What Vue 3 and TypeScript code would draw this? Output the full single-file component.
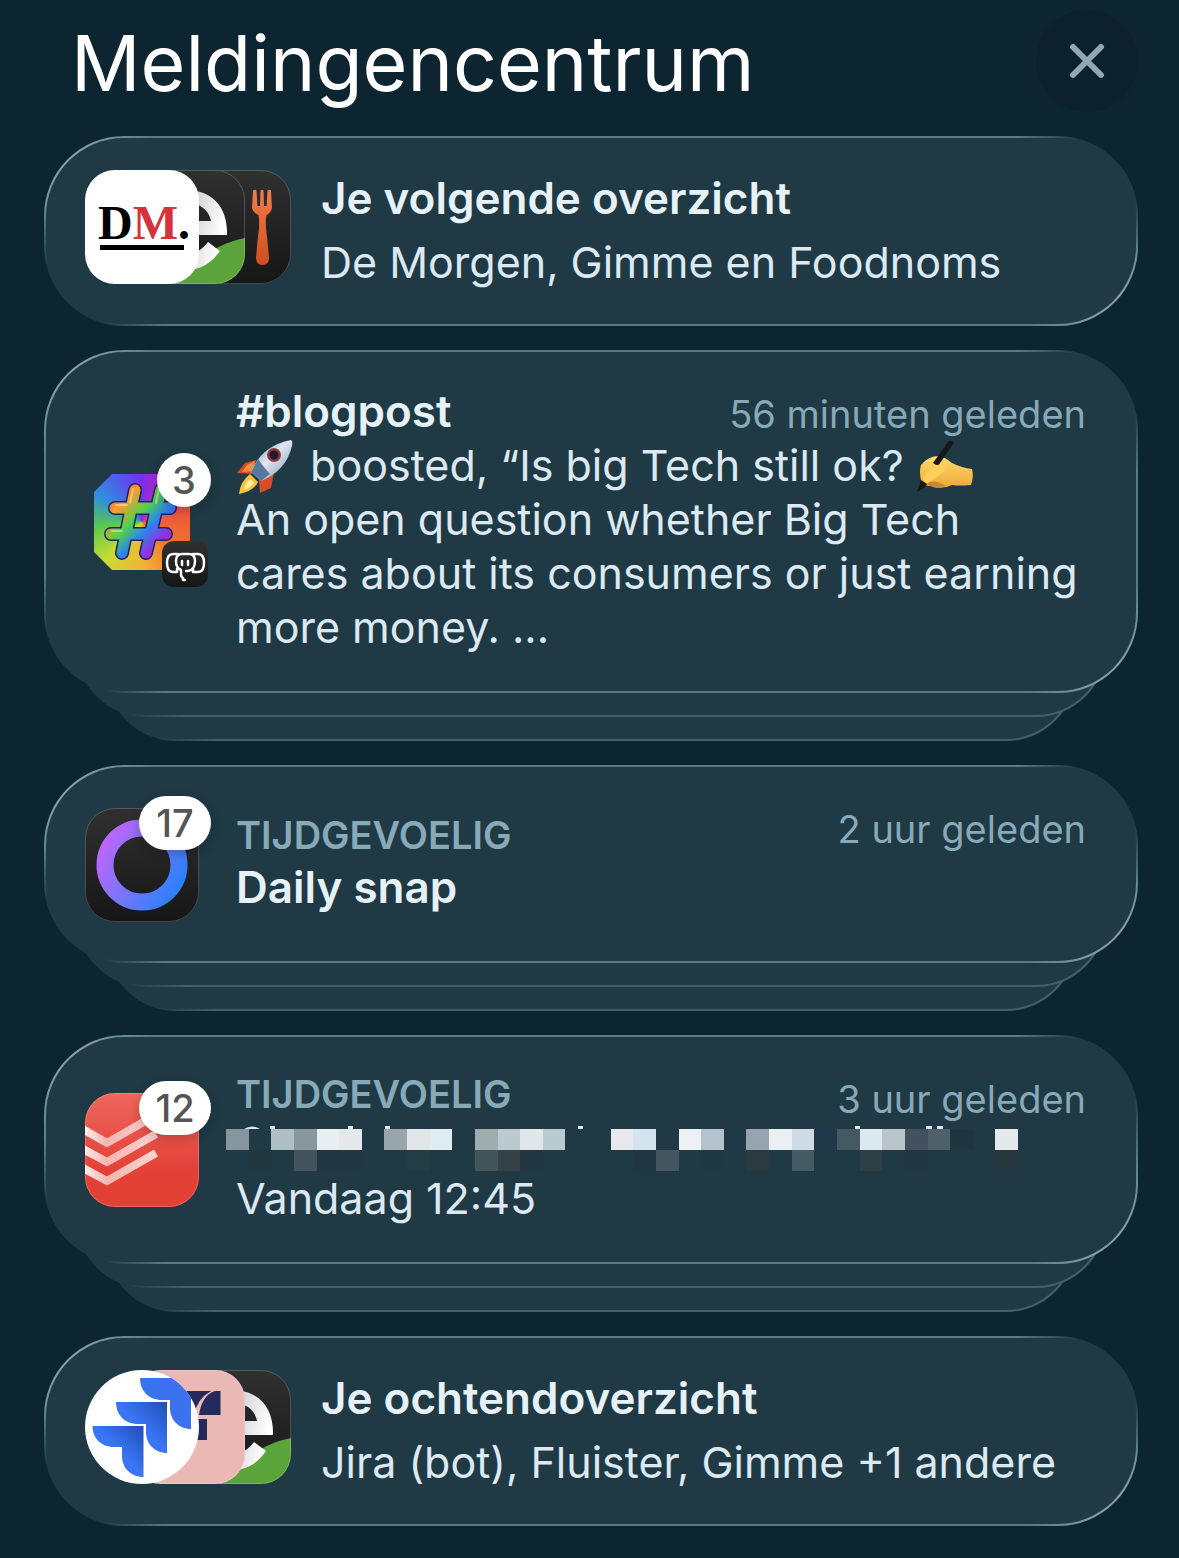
<script setup lang="ts">
type AppIcon = 'morgen' | 'gimme' | 'foodnoms' | 'jira' | 'fluister' | 'hashtag' | 'ring' | 'todoist'

interface Summary {
  kind: 'summary'
  id: string
  title: string
  apps: string
  icons: AppIcon[]
}

interface Stack {
  kind: 'stack'
  id: string
  icon: AppIcon
  count: number
  time: string
  post?: boolean
  label?: string
  title?: string
  redacted?: boolean
  detail?: string
}

const notifications: (Summary | Stack)[] = [
  {
    kind: 'summary',
    id: 'next',
    title: 'Je volgende overzicht',
    apps: 'De Morgen, Gimme en Foodnoms',
    icons: ['morgen', 'gimme', 'foodnoms'],
  },
  { kind: 'stack', id: 'blog', icon: 'hashtag', count: 3, time: '56 minuten geleden', title: '#blogpost', post: true },
  { kind: 'stack', id: 'snap', icon: 'ring', count: 17, time: '2 uur geleden', label: 'TIJDGEVOELIG', title: 'Daily snap' },
  {
    kind: 'stack',
    id: 'todo',
    icon: 'todoist',
    count: 12,
    time: '3 uur geleden',
    label: 'TIJDGEVOELIG',
    redacted: true,
    detail: 'Vandaag 12:45',
  },
  {
    kind: 'summary',
    id: 'morning',
    title: 'Je ochtendoverzicht',
    apps: 'Jira (bot), Fluister, Gimme +1 andere',
    icons: ['jira', 'fluister', 'gimme'],
  },
]

// Mosaic cells: [column, row, colour]
const cells: [number, number, string][] = [
  [0, 0, '#87969e'], [2, 0, '#b0bec5'], [3, 0, '#87969f'], [4, 0, '#e8eff2'], [5, 0, '#e6e9ec'],
  [7, 0, '#9aa5a9'], [8, 0, '#e2e6e9'], [9, 0, '#dfedf1'], [11, 0, '#9fadaf'], [12, 0, '#bccacf'],
  [13, 0, '#e2e6eb'], [14, 0, '#b8cbd1'], [17, 0, '#e8e9ec'], [18, 0, '#d4e4ef'], [20, 0, '#edf1f3'],
  [21, 0, '#b4c2cb'], [23, 0, '#97a4ae'], [24, 0, '#e9eff2'], [25, 0, '#d0dae3'], [26, 0, '#20394a'],
  [27, 0, '#435a63'], [28, 0, '#dce9ef'], [29, 0, '#b9c5ca'], [30, 0, '#43515f'], [31, 0, '#4f606b'],
  [32, 0, '#1f3540'], [34, 0, '#e6e9ec'],
  [1, 1, '#22383f'], [3, 1, '#43555c'], [4, 1, '#223741'], [5, 1, '#223741'], [8, 1, '#233d44'],
  [11, 1, '#435558'], [12, 1, '#354248'], [13, 1, '#223742'], [18, 1, '#203641'], [19, 1, '#44565f'],
  [21, 1, '#203841'], [23, 1, '#2a3a40'], [25, 1, '#445b64'], [28, 1, '#2e3f46'], [30, 1, '#223741'],
  [34, 1, '#26373e'],
]
const column = (i: number): number => Math.round(i * 22.63)
</script>

<template>
  <main class="center">
    <header class="top">
      <h1>Meldingencentrum</h1>
      <button class="close" type="button" aria-label="Sluit">
        <svg viewBox="0 0 36 36" aria-hidden="true"><path d="M4 4L32 32M32 4L4 32" /></svg>
      </button>
    </header>

    <svg class="defs" aria-hidden="true">
      <defs>
        <linearGradient id="dark" x1="0" y1="0" x2="0" y2="1"><stop offset="0" stop-color="#303030" /><stop offset="1" stop-color="#161616" /></linearGradient>
        <linearGradient id="orange" x1="0" y1="0" x2="0" y2="1"><stop offset="0" stop-color="#f47c48" /><stop offset="1" stop-color="#cb4f20" /></linearGradient>
        <linearGradient id="ring" x1="0" y1="0.2" x2="1" y2="0.8"><stop offset="0" stop-color="#bb66fa" /><stop offset="0.5" stop-color="#7576fa" /><stop offset="1" stop-color="#2c80fb" /></linearGradient>
        <linearGradient id="red" x1="0" y1="0" x2="0" y2="1"><stop offset="0" stop-color="#ee665d" /><stop offset="0.7" stop-color="#e34036" /></linearGradient>
        <linearGradient id="chevron" x1="0" y1="0" x2="1" y2="0"><stop offset="0" stop-color="#fff3f1" /><stop offset="0.35" stop-color="#f5b5b0" /><stop offset="1" stop-color="#fbd3d0" /></linearGradient>
        <linearGradient id="jira" x1="1" y1="0" x2="0.3" y2="0.7"><stop offset="0" stop-color="#1f4fb8" /><stop offset="0.7" stop-color="#3a75f5" /></linearGradient>
        <linearGradient id="hash" gradientUnits="userSpaceOnUse" x1="12" y1="14" x2="84" y2="84">
          <stop offset="0" stop-color="#f5453a" /><stop offset="0.22" stop-color="#ff9a2e" /><stop offset="0.42" stop-color="#4fd24a" /><stop offset="0.58" stop-color="#2d83f0" /><stop offset="0.76" stop-color="#9a2be0" /><stop offset="1" stop-color="#e0348a" />
        </linearGradient>
        <linearGradient id="letter" x1="0" y1="0" x2="1" y2="0.2"><stop offset="0.4" stop-color="#bdbdbd" /><stop offset="1" stop-color="#ffffff" /></linearGradient>
        <linearGradient id="hull" x1="0" y1="0" x2="1" y2="1"><stop offset="0" stop-color="#5d83ad" /><stop offset="0.45" stop-color="#dfe7ef" /><stop offset="1" stop-color="#7f93ab" /></linearGradient>
        <linearGradient id="skin" x1="0" y1="0" x2="0" y2="1"><stop offset="0" stop-color="#ffda68" /><stop offset="1" stop-color="#eda93a" /></linearGradient>
      </defs>
    </svg>

    <article v-for="item in notifications" :key="item.id" :class="['note', item.kind]">
      <div class="card">
        <div :class="item.kind === 'summary' ? 'icons' : 'lead'">
          <template v-for="icon in item.kind === 'summary' ? item.icons : [item.icon]" :key="icon">
            <svg v-if="icon === 'morgen'" class="app" viewBox="0 0 114 114" aria-hidden="true">
              <rect width="114" height="114" fill="#fff" />
              <text class="masthead" x="13" y="69">D<tspan fill="#d6323c">M</tspan>.</text>
              <rect x="15" y="75" width="84" height="5" />
            </svg>
            <svg v-else-if="icon === 'gimme'" class="app rim" viewBox="0 0 114 114" aria-hidden="true">
              <rect width="114" height="114" fill="url(#dark)" />
              <path d="M40 114C66 108 64 78 114 68V114Z" fill="#5ba43a" />
              <path fill="url(#letter)" fill-rule="evenodd" d="M96 65H34C35 78 43 84 55 84C64 84 71 80 77 72L89 81C80 94 69 100 55 100C30 100 15 84 15 60C15 36 31 20 55 20C82 20 97 38 96 65ZM80 51C78 40 69 33 56 33C44 33 36 40 34 51Z" />
            </svg>
            <svg v-else-if="icon === 'foodnoms'" class="app rim" viewBox="0 0 114 114" aria-hidden="true">
              <rect width="114" height="114" fill="url(#dark)" />
              <path fill="url(#orange)" d="M76 20.500Q78 19 79.500 20.500L80.500 36H83L83.500 20.500Q85 19 86.500 20.500L87 36H89.500L90.500 20.500Q92.500 19 94 20.500L95 38Q94 43 89.500 45Q88.500 50 89 58Q91 74 92 88Q92 95 85.500 95Q79 95 79 88Q80 74 82 58Q82.500 50 81.500 45Q76 43 75 38Z" />
            </svg>
            <svg v-else-if="icon === 'jira'" class="app round" viewBox="0 0 114 114" aria-hidden="true">
              <rect width="114" height="114" fill="#fff" />
              <path fill="#3a72ef" d="M55 8H106V59C94 59 85 50 85 38V30H77C64 30 55 21 55 8Z" />
              <path fill="url(#jira)" d="M31 32H82V83C70 83 61 74 61 62V54H53C40 54 31 45 31 32Z" />
              <path fill="url(#jira)" d="M7.500 56H58.500V107C46 107 37 98 37 86V77H29C16 77 7.500 68 7.500 56Z" />
            </svg>
            <svg v-else-if="icon === 'fluister'" class="app rim" viewBox="0 0 114 114" aria-hidden="true">
              <rect width="114" height="114" fill="#ebb9b5" />
              <path fill="#252a5c" d="M30 21H80Q66 29 63 45H30ZM89.500 21V45H68Q71 25 84 21ZM30 49H76V70H30Z" />
            </svg>
            <div v-else-if="icon === 'hashtag'" class="avatar">
              <svg viewBox="0 0 96 96" aria-hidden="true">
                <g fill="none" stroke-linecap="round" stroke-linejoin="round">
                  <path stroke="#1c2560" stroke-width="14" d="M41 16L28 79M67 16L52 79M21 34H76M17 60H72" />
                  <path stroke="url(#hash)" stroke-width="11" d="M41 16L28 79M67 16L52 79M21 34H76M17 60H72" />
                  <path stroke="#ffffff" stroke-opacity="0.4" stroke-width="2" d="M39 15L36 29M65 15L62 29M22 31H33M18 57H28" />
                </g>
              </svg>
            </div>
            <svg v-else-if="icon === 'ring'" class="app rim" viewBox="0 0 114 114" aria-hidden="true">
              <rect width="114" height="114" fill="url(#dark)" />
              <circle cx="57" cy="57" r="37" fill="none" stroke="url(#ring)" stroke-width="17" />
            </svg>
            <svg v-else class="app rim" viewBox="0 0 114 114" aria-hidden="true">
              <rect width="114" height="114" fill="url(#red)" />
              <path fill="none" stroke="url(#chevron)" stroke-width="8" d="M-4 35L22 50L69 23M-4 55L22 69L71 41M-4 74L22 88L71 60" />
            </svg>
          </template>
          <template v-if="item.kind === 'stack'">
            <span :class="['count', { wide: item.count > 9 }]">{{ item.count }}</span>
            <svg v-if="item.post" class="source" viewBox="0 0 46 46" aria-hidden="true">
              <rect width="46" height="46" fill="url(#dark)" />
              <g fill="none" stroke="#fff" stroke-width="2.500" stroke-linecap="round" stroke-linejoin="round">
                <path d="M19 29V33Q19 36 21 37V39H23M19 29Q14 27 14 20Q14 13 20 13H27Q33 13 33 20Q33 29 26 30H24M16 13H11Q5 13 5 22Q5 31 11 31H15V28M31 13H36Q42 13 42 22Q42 31 36 31H31V28" />
                <path d="M20 20V24M26 20V24" />
              </g>
            </svg>
          </template>
        </div>

        <div v-if="item.kind === 'summary'" class="digest">
          <h2>{{ item.title }}</h2>
          <p>{{ item.apps }}</p>
        </div>

        <div v-else-if="item.post" class="text">
          <div class="heading">
            <h2>{{ item.title }}</h2>
            <time>{{ item.time }}</time>
          </div>
          <p class="post">
            <svg class="emoji" viewBox="0 0 58 58" role="img" aria-label="raket">
              <path fill="#dd4a26" d="M20 20L9 23L1 33L16 34ZM38 32L35 48L24 53L23 40Z" />
              <path fill="#f1913f" d="M19 21L11 25L6 32L16 31Z" />
              <path fill="#f6c63a" d="M14 34L22 42Q18 51 3 54Q4 42 14 34Z" />
              <path fill="#fff0a0" d="M14 39L18 43Q14 48 8 50Q9 43 14 39Z" />
              <path fill="url(#hull)" d="M15 32Q25 6 55 0Q57 1 56 6Q50 31 25 41Z" />
              <path fill="#56799f" d="M15 32L22 19Q29 29 34 34L25 41Z" />
              <circle cx="38" cy="15" r="7" fill="#8e3940" /><circle cx="38" cy="15" r="4.500" fill="#211c29" />
            </svg>
            boosted, “Is big Tech still ok?
            <svg class="emoji" viewBox="0 0 58 58" role="img" aria-label="schrijvende hand">
              <path fill="url(#skin)" d="M5 25Q12 16 23 16Q29 17 36 23Q46 28 56 29Q58 37 55 45Q44 46 36 45Q26 50 16 46Q6 46 5 40Q3 32 5 25Z" />
              <path fill="#c98a3a" d="M10 43Q18 39 30 46Q22 50 14 46Z" />
              <path fill="#17181c" d="M32 2Q36 -1 38 3L22 26L17 23Z" />
              <path fill="#17181c" d="M5 40L11 44L8 48L1 52Z" />
              <path fill="#ffd15a" d="M7 38Q12 30 21 25Q28 24 29 30Q22 37 12 43Q7 43 7 38Z" />
            </svg>
            <br />An open question whether Big Tech
            <br />cares about its consumers or just earning
            <br />more money. ...
          </p>
        </div>

        <template v-else>
          <div class="text">
            <p class="label">{{ item.label }}</p>
            <h2 v-if="item.title">{{ item.title }}</h2>
            <svg v-if="item.redacted" class="redacted" viewBox="0 0 792 46" role="img" aria-label="Verborgen tekst">
              <g fill="#d9e7ee">
                <path d="M18 4Q26 -1 34 4Z" />
                <path d="M44 1h5v3h-5ZM122 1h5v3h-5ZM159 1h5v3h-5ZM352 1h5v3h-5ZM629 1h5v3h-5ZM700 1h6v3h-6ZM711 1h6v3h-6Z" />
              </g>
              <rect
                v-for="[col, row, fill] in cells"
                :key="`${col}-${row}`"
                :x="column(col)"
                :y="4 + row * 21"
                :width="column(col + 1) - column(col)"
                height="21"
                :fill="fill"
              />
            </svg>
            <p v-if="item.detail">{{ item.detail }}</p>
          </div>
          <time class="aside">{{ item.time }}</time>
        </template>
      </div>
    </article>
  </main>
</template>

<style>
body {
  margin: 0;
  background: #0c2531;
}
</style>

<style scoped>
.center {
  --fill: #1f3a45;
  display: flex;
  flex-direction: column;
  gap: 24px;
  box-sizing: border-box;
  min-height: 100vh;
  padding: 0 41px 31px 44px;
  background: #0c2531;
  color: #dce9f3;
  font-family: Inter, "Noto Sans", sans-serif;
}

h1,
h2,
p {
  margin: 0;
}

.defs {
  position: absolute;
  width: 0;
  height: 0;
}

.top {
  display: flex;
  align-items: center;
  justify-content: space-between;
  height: 112px;
  padding-left: 27px;
}

h1 {
  margin-top: 14px;
  color: #fff;
  font-size: 77px;
  font-weight: 400;
  line-height: 96px;
}

.close {
  display: grid;
  place-items: center;
  width: 102px;
  height: 102px;
  margin-top: 10px;
  padding: 0;
  border: 0;
  border-radius: 50%;
  background: #0c212b;
}

.close svg {
  width: 36px;
  height: 36px;
  fill: none;
  stroke: #8fa8b3;
  stroke-width: 6;
  stroke-linecap: round;
}

.note {
  position: relative;
  z-index: 0;
}

.stack {
  padding-bottom: 48px;
}

.card,
.stack::before,
.stack::after {
  box-sizing: border-box;
  border: 2px solid transparent;
  border-radius: 80px;
}

.card {
  display: flex;
  padding: 32px 50px 37px 39px;
  background:
    linear-gradient(var(--fill), var(--fill)) padding-box,
    radial-gradient(circle at 100% 0, var(--fill) 60px, transparent 120px) border-box,
    radial-gradient(circle at 0 100%, var(--fill) 60px, transparent 120px) border-box,
    radial-gradient(circle at 0 0, #86a5ad 30px, transparent 110px) border-box,
    radial-gradient(circle at 100% 100%, #86a5ad 30px, transparent 110px) border-box,
    linear-gradient(#5a7982, #5a7982) border-box;
}

.stack::before,
.stack::after {
  content: "";
  position: absolute;
  z-index: -1;
  height: 150px;
  border-radius: 70px;
  background:
    linear-gradient(var(--fill), var(--fill)) padding-box,
    radial-gradient(circle at 0 100%, var(--fill) 50px, transparent 110px) border-box,
    linear-gradient(#43606a, #43606a) border-box;
}

.stack::before {
  right: 32px;
  bottom: 24px;
  left: 32px;
}

.stack::after {
  z-index: -2;
  right: 62px;
  bottom: 0;
  left: 62px;
}

.summary .card {
  gap: 30px;
  padding-bottom: 34px;
}

.stack .card {
  align-items: center;
  gap: 37px;
  min-height: 198px;
}

.icons {
  display: flex;
  flex: none;
}

.app {
  position: relative;
  display: block;
  width: 114px;
  height: 114px;
  border-radius: 30px;
  overflow: hidden;
}

.icons .app + .app {
  margin-left: -68px;
}

.icons .app:nth-child(1) {
  z-index: 2;
}

.icons .app:nth-child(2) {
  z-index: 1;
}

.rim {
  outline: 1px solid rgba(255, 255, 255, 0.2);
  outline-offset: -1px;
}

.round {
  border-radius: 50%;
}

.masthead {
  font-family: "Liberation Serif", serif;
  font-size: 48px;
  font-weight: 700;
}

.lead {
  position: relative;
  flex: none;
  width: 114px;
  margin-top: 6px;
}

.avatar {
  width: 96px;
  height: 96px;
  margin: 0 auto;
  background: conic-gradient(from 0deg, #7b2fe6, #c42bc0 10%, #ee5a36 22%, #f07a2c 38%, #f2b534 50%, #c9da35 62%, #5ccc48 73%, #2f8de0 84%, #5a4fee 94%, #7b2fe6);
  clip-path: polygon(18px 0, 78px 0, 100% 18px, 100% 78px, 78px 100%, 18px 100%, 0 78px, 0 18px);
}

.avatar svg {
  display: block;
}

.count {
  position: absolute;
  top: -12px;
  right: -12px;
  width: 54px;
  border-radius: 27px;
  background: #fff;
  box-shadow: 0 4px 12px rgba(0, 0, 0, 0.2);
  color: #555;
  font-size: 38px;
  font-weight: 500;
  line-height: 54px;
  text-align: center;
}

.wide {
  width: 72px;
}

.avatar + .count {
  top: -21px;
}

.source {
  position: absolute;
  right: -9px;
  bottom: -17px;
  width: 46px;
  height: 46px;
  border-radius: 12px;
}

h2,
p {
  font-size: 43px;
  line-height: 54px;
  white-space: nowrap;
}

h2 {
  color: #e6f1f8;
  font-size: 44px;
  font-weight: 600;
}

.digest {
  display: flex;
  flex-direction: column;
  gap: 8px;
}

.digest h2,
.digest p {
  line-height: 56px;
}

.text {
  flex: 1;
  min-width: 0;
}

.heading {
  display: flex;
  justify-content: space-between;
  height: 54px;
}

time {
  margin-top: 3px;
  color: #87a9b8;
  font-size: 38px;
  line-height: 54px;
}

.aside {
  align-self: flex-start;
}

.label {
  color: #87a9b8;
  font-size: 38px;
  font-weight: 600;
  line-height: 50px;
}

.emoji {
  width: 58px;
  height: 58px;
  margin: -8px 4px -8px 0;
  vertical-align: middle;
}

.redacted {
  display: block;
  width: 792px;
  height: 46px;
  margin: 6px 0 0 -10px;
}
</style>
